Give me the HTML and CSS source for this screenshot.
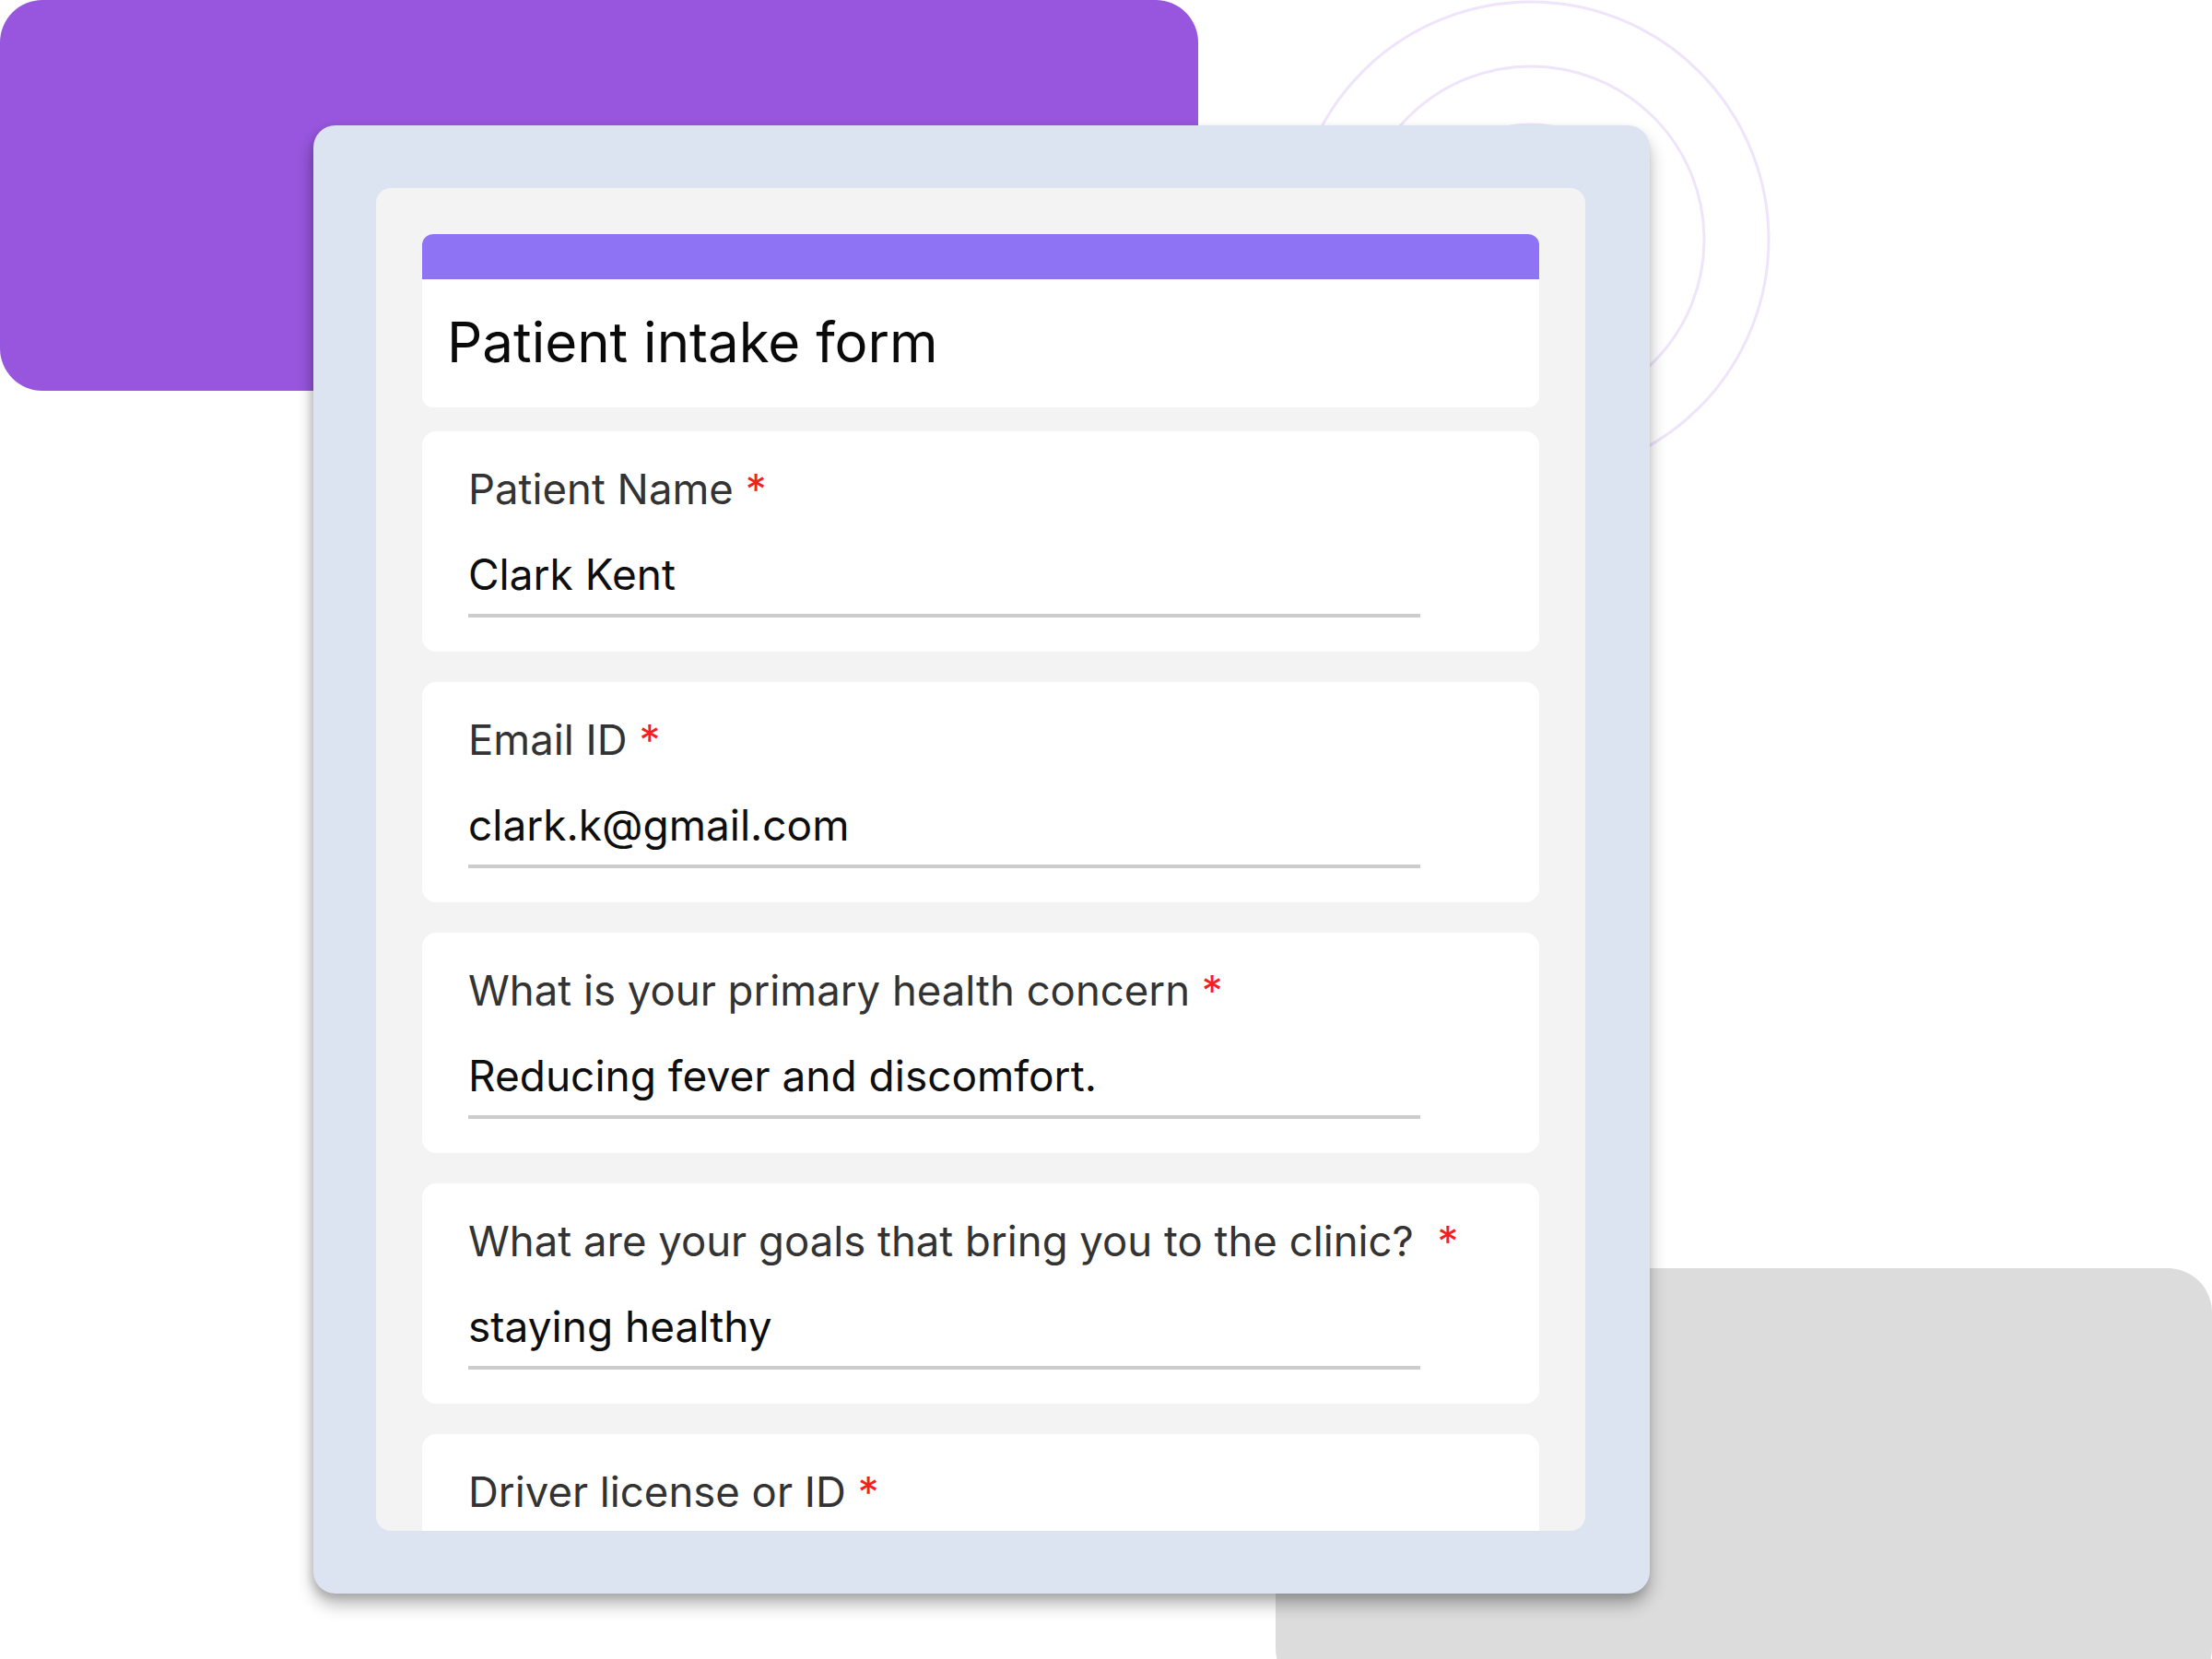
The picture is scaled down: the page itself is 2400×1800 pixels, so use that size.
FILE: index.html
```html
<!DOCTYPE html>
<html lang="en">
<head>
<meta charset="utf-8">
<title>Patient intake form</title>
<link rel="stylesheet" href="styles.css">
</head>
<body>
<div class="scene">
  <div class="deco deco-purple"></div>
  <div class="deco deco-gray"></div>
  <svg class="deco deco-rings" width="540" height="540" viewBox="0 0 540 540" aria-hidden="true">
    <circle cx="270" cy="270" r="258" fill="none" stroke="#EEE4FC" stroke-width="3"/>
    <circle cx="270" cy="270" r="188" fill="none" stroke="#EEE4FC" stroke-width="3"/>
    <circle cx="270" cy="270" r="125" fill="none" stroke="#EEE4FC" stroke-width="3"/>
  </svg>

  <main class="device">
    <div class="panel">
      <header class="form-head">
        <div class="form-band"></div>
        <h1 class="form-title">Patient intake form</h1>
      </header>

      <section class="q-card">
        <div class="q-label">Patient Name <span class="req">*</span></div>
        <div class="q-value">Clark Kent</div>
        <div class="q-line"></div>
      </section>

      <section class="q-card">
        <div class="q-label">Email ID <span class="req">*</span></div>
        <div class="q-value">clark.k@gmail.com</div>
        <div class="q-line"></div>
      </section>

      <section class="q-card">
        <div class="q-label">What is your primary health concern <span class="req">*</span></div>
        <div class="q-value">Reducing fever and discomfort.</div>
        <div class="q-line"></div>
      </section>

      <section class="q-card">
        <div class="q-label">What are your goals that bring you to the clinic?&nbsp; <span class="req">*</span></div>
        <div class="q-value">staying healthy</div>
        <div class="q-line"></div>
      </section>

      <section class="q-card">
        <div class="q-label">Driver license or ID <span class="req">*</span></div>
        <div class="q-value">&nbsp;</div>
        <div class="q-line"></div>
      </section>
    </div>
  </main>
</div>
</body>
</html>
```

FILE: styles.css
```css
html, body {
  margin: 0;
  padding: 0;
  background: #ffffff;
}

body {
  width: 2400px;
  height: 1800px;
  overflow: hidden;
  font-family: Inter, "Noto Sans", "Liberation Sans", sans-serif;
}

.scene {
  position: relative;
  width: 2400px;
  height: 1800px;
  overflow: hidden;
  padding-top: 136px;
  box-sizing: border-box;
}

.deco {
  position: absolute;
  z-index: 0;
}

.deco-purple {
  left: 0;
  top: 0;
  width: 1300px;
  height: 424px;
  background: #9756DD;
  border-radius: 46px;
}

.deco-gray {
  left: 1384px;
  top: 1376px;
  width: 1016px;
  height: 460px;
  background: #DCDCDC;
  border-radius: 48px;
}

.deco-rings {
  left: 1391px;
  top: -10px;
}

.device {
  position: relative;
  z-index: 1;
  margin-left: 340px;
  width: 1450px;
  height: 1593px;
  box-sizing: border-box;
  padding: 68px 70px 68px 68px;
  background: #DCE4F2;
  border-radius: 24px;
  box-shadow: 0 12px 18px rgba(0, 0, 0, 0.28), -3px 4px 8px rgba(0, 0, 0, 0.12);
}

.panel {
  height: 100%;
  box-sizing: border-box;
  padding: 50px 50px 0 50px;
  background: #F3F3F3;
  border-radius: 16px;
  overflow: hidden;
  display: flex;
  flex-direction: column;
  gap: 33px;
}

.form-head {
  flex: none;
  background: #ffffff;
  border-radius: 12px;
  overflow: hidden;
  margin-bottom: -7px;
}

.form-band {
  height: 49px;
  background: #8E74F4;
}

.form-title {
  margin: 0;
  padding: 32px 0 35px 27px;
  font-size: 60px;
  line-height: 72px;
  font-weight: 400;
  color: #0A0A0A;
}

.q-card {
  flex: none;
  background: #ffffff;
  border-radius: 15px;
  padding: 36px 0 37px 50px;
}

.q-label {
  font-size: 45.5px;
  line-height: 53px;
  color: #333333;
}

.req {
  color: #F42020;
}

.q-value {
  margin-top: 39px;
  font-size: 46px;
  line-height: 54px;
  color: #0E0E0E;
}

.q-line {
  margin-top: 16px;
  width: 1033px;
  height: 4px;
  background: #CCCCCC;
}
```
